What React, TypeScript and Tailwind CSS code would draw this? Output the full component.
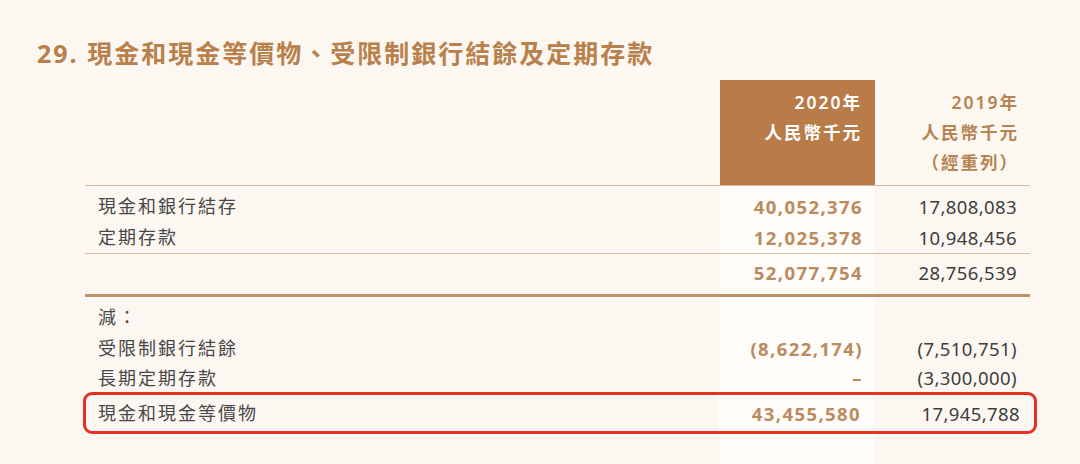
import React from "react";

const FONT = { fontFamily: '"Noto Sans", "Noto Sans CJK TC", sans-serif' };

function Row({
  label,
  a,
  b,
  h,
  extra = "",
}: {
  label?: string;
  a?: string;
  b?: string;
  h: string;
  extra?: string;
}) {
  return (
    <div className={`grid grid-cols-[635px_155px_155px] ${extra}`}>
      <div className={`${h} flex items-center pl-[13px] text-[18px] tracking-[2px] text-[#474747]`}>{label}</div>
      <div className={`${h} flex items-center justify-end pr-[12px] bg-[#fffcf9] text-[18.5px] font-bold tracking-[1.4px] text-[#b98b5f]`}>{a}</div>
      <div className={`${h} flex items-center justify-end pr-[13px] text-[18.5px] tracking-[0.4px] text-[#3d3d3d]`}>{b}</div>
    </div>
  );
}

export default function App() {
  return (
    <div className="w-[1080px] h-[464px] overflow-hidden bg-[#fcf7f1]" style={FONT}>
      <div className="h-[38px]" />
      <div className="h-[32px] pl-[37px] flex items-center text-[25px] font-bold tracking-[2px] text-[#b8814c]">
        29. 現金和現金等價物、受限制銀行結餘及定期存款
      </div>
      <div className="h-[10px]" />
      <div className="ml-[85px] w-[945px]">
        {/* header */}
        <div className="grid grid-cols-[635px_155px_155px] border-b border-[#d8bc9f]">
          <div className="h-[105px]" />
          <div className="h-[105px] bg-[#b97c48] pt-[7px] pr-[13px] text-right text-[17.5px] font-semibold tracking-[2px] leading-[30px] text-white">
            <div>2020年</div>
            <div>人民幣千元</div>
          </div>
          <div className="h-[105px] pt-[7px] pr-[11px] text-right text-[17.5px] font-semibold tracking-[2px] leading-[30px] text-[#b68352]">
            <div>2019年</div>
            <div>人民幣千元</div>
            <div>（經重列）</div>
          </div>
        </div>
        <Row h="h-[5px]" />
        <Row h="h-[31px]" label="現金和銀行結存" a="40,052,376" b="17,808,083" />
        <Row h="h-[31px]" label="定期存款" a="12,025,378" b="10,948,456" extra="border-b border-[#d8bc9f]" />
        <Row h="h-[40px] pb-[2px]" a="52,077,754" b="28,756,539" extra="border-b-[3px] border-[#bf9265]" />
        <Row h="h-[5px]" />
        <Row h="h-[31px]" label="減：" />
        <Row h="h-[31px]" label="受限制銀行結餘" a="(8,622,174)" b="(7,510,751)" />
        <Row h="h-[28px]" label="長期定期存款" a="–" b="(3,300,000)" />
        <div className="-ml-[2px] w-[954px] h-[42px] rounded-[9px] border-[3px] border-[#e5321f] grid grid-cols-[632px_155px_164px]">
          <div className="flex items-center pl-[12px] pt-[1px] text-[18px] tracking-[2px] text-[#474747]">現金和現金等價物</div>
          <div className="flex items-center justify-end pr-[12px] pt-[1px] bg-[#fffcf9] text-[18.5px] font-bold tracking-[1.4px] text-[#b98b5f]">43,455,580</div>
          <div className="flex items-center justify-end pr-[17px] pt-[1px] text-[18.5px] tracking-[0.4px] text-[#3d3d3d]">17,945,788</div>
        </div>
        <Row h="h-[40px]" />
      </div>
    </div>
  );
}
